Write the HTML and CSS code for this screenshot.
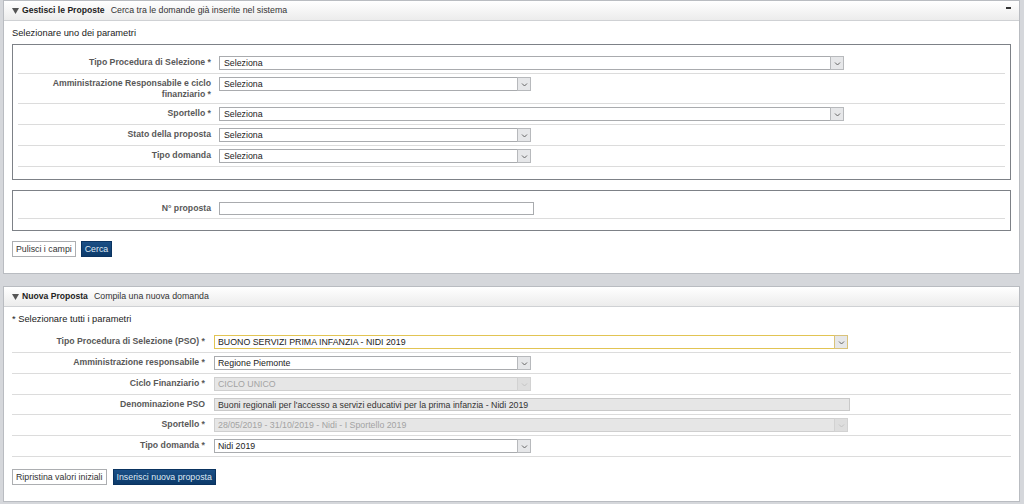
FILE: index.html
```html
<!DOCTYPE html>
<html lang="it">
<head>
<meta charset="utf-8">
<title>Gestisci le Proposte</title>
<link rel="stylesheet" href="styles.css">
</head>
<body>
<div class="page">
  <section class="panel panel-search">
    <header class="panel-head">
      <svg class="tri" width="7" height="6" viewBox="0 0 7 6"><polygon points="0,0 7,0 3.5,6" fill="#555"/></svg>
      <span class="title">Gestisci le Proposte</span>
      <span class="sub">Cerca tra le domande già inserite nel sistema</span>
      <span class="minimize"></span>
    </header>
    <div class="panel-body">
      <p class="hint">Selezionare uno dei parametri</p>
      <div class="box">
        <div class="row">
          <label class="lbl">Tipo Procedura di Selezione *</label>
          <div class="field"><span class="select w-wide">Seleziona<i class="arrow"><svg width="11" height="11" viewBox="0 0 11 11"><polyline points="3,4.5 5.5,7 8,4.5" fill="none" stroke="#666" stroke-width="1"/></svg></i></span></div>
        </div>
        <div class="row">
          <label class="lbl">Amministrazione Responsabile e ciclo finanziario *</label>
          <div class="field"><span class="select w-narrow">Seleziona<i class="arrow"><svg width="11" height="11" viewBox="0 0 11 11"><polyline points="3,4.5 5.5,7 8,4.5" fill="none" stroke="#666" stroke-width="1"/></svg></i></span></div>
        </div>
        <div class="row">
          <label class="lbl">Sportello *</label>
          <div class="field"><span class="select w-wide">Seleziona<i class="arrow"><svg width="11" height="11" viewBox="0 0 11 11"><polyline points="3,4.5 5.5,7 8,4.5" fill="none" stroke="#666" stroke-width="1"/></svg></i></span></div>
        </div>
        <div class="row">
          <label class="lbl">Stato della proposta</label>
          <div class="field"><span class="select w-narrow">Seleziona<i class="arrow"><svg width="11" height="11" viewBox="0 0 11 11"><polyline points="3,4.5 5.5,7 8,4.5" fill="none" stroke="#666" stroke-width="1"/></svg></i></span></div>
        </div>
        <div class="row">
          <label class="lbl">Tipo domanda</label>
          <div class="field"><span class="select w-narrow">Seleziona<i class="arrow"><svg width="11" height="11" viewBox="0 0 11 11"><polyline points="3,4.5 5.5,7 8,4.5" fill="none" stroke="#666" stroke-width="1"/></svg></i></span></div>
        </div>
      </div>
      <div class="box box-num">
        <div class="row">
          <label class="lbl">N° proposta</label>
          <div class="field"><span class="input w-num"></span></div>
        </div>
      </div>
      <div class="actions">
        <button class="btn">Pulisci i campi</button>
        <button class="btn btn-primary">Cerca</button>
      </div>
    </div>
  </section>

  <section class="panel panel-new">
    <header class="panel-head">
      <svg class="tri" width="7" height="6" viewBox="0 0 7 6"><polygon points="0,0 7,0 3.5,6" fill="#555"/></svg>
      <span class="title">Nuova Proposta</span>
      <span class="sub">Compila una nuova domanda</span>
    </header>
    <div class="panel-body">
      <p class="hint hint-new">* Selezionare tutti i parametri</p>
      <div class="rows">
        <div class="row">
          <label class="lbl">Tipo Procedura di Selezione (PSO) *</label>
          <div class="field"><span class="select w-wide2 focused">BUONO SERVIZI PRIMA INFANZIA - NIDI 2019<i class="arrow"><svg width="11" height="11" viewBox="0 0 11 11"><polyline points="3,4.5 5.5,7 8,4.5" fill="none" stroke="#666" stroke-width="1"/></svg></i></span></div>
        </div>
        <div class="row">
          <label class="lbl">Amministrazione responsabile *</label>
          <div class="field"><span class="select w-narrow2">Regione Piemonte<i class="arrow"><svg width="11" height="11" viewBox="0 0 11 11"><polyline points="3,4.5 5.5,7 8,4.5" fill="none" stroke="#666" stroke-width="1"/></svg></i></span></div>
        </div>
        <div class="row">
          <label class="lbl">Ciclo Finanziario *</label>
          <div class="field"><span class="select w-narrow2 disabled">CICLO UNICO<i class="arrow"><svg width="11" height="11" viewBox="0 0 11 11"><polyline points="3,4.5 5.5,7 8,4.5" fill="none" stroke="#c4c4c4" stroke-width="1"/></svg></i></span></div>
        </div>
        <div class="row">
          <label class="lbl">Denominazione PSO</label>
          <div class="field"><span class="input w-den readonly">Buoni regionali per l'accesso a servizi educativi per la prima infanzia - Nidi 2019</span></div>
        </div>
        <div class="row">
          <label class="lbl">Sportello *</label>
          <div class="field"><span class="select w-wide2 disabled">28/05/2019 - 31/10/2019 - Nidi - I Sportello 2019<i class="arrow"><svg width="11" height="11" viewBox="0 0 11 11"><polyline points="3,4.5 5.5,7 8,4.5" fill="none" stroke="#c4c4c4" stroke-width="1"/></svg></i></span></div>
        </div>
        <div class="row">
          <label class="lbl">Tipo domanda *</label>
          <div class="field"><span class="select w-narrow2">Nidi 2019<i class="arrow"><svg width="11" height="11" viewBox="0 0 11 11"><polyline points="3,4.5 5.5,7 8,4.5" fill="none" stroke="#666" stroke-width="1"/></svg></i></span></div>
        </div>
      </div>
      <div class="actions actions-new">
        <button class="btn">Ripristina valori iniziali</button>
        <button class="btn btn-primary">Inserisci nuova proposta</button>
      </div>
    </div>
  </section>
</div>
</body>
</html>
```

FILE: styles.css
```css
* { box-sizing: border-box; }

html, body {
  margin: 0;
  padding: 0;
  background: #d5d7db;
}

body {
  font-family: "Liberation Sans", Arial, sans-serif;
  font-size: 9px;
  line-height: 11px;
  color: #222;
}

.page {
  display: flex;
  flex-direction: column;
  gap: 12px;
  padding: 0 4px 4px 3px;
}

.panel {
  background: #fff;
  border: 1px solid #b9bcc1;
}

.panel-head {
  display: flex;
  align-items: center;
  height: 20px;
  padding: 0 7px 0 8px;
  background: linear-gradient(#ffffff, #ececec);
  border-bottom: 1px solid #cfd1d4;
  color: #222;
  font-size: 8.6px;
}

.tri { margin-right: 3px; flex: none; }

.title {
  font-weight: bold;
  margin-right: 6px;
}

.sub { color: #333; font-size: 8.8px; }

.minimize {
  margin-left: auto;
  margin-right: 1px;
  width: 5px;
  height: 2px;
  background: #333;
  margin-bottom: 6px;
}

.panel-body {
  padding: 7px 8px 16px 8px;
}

.hint {
  margin: 0;
  color: #222;
  font-size: 9.3px;
}

.box {
  margin-top: 5px;
  border: 1px solid #7d8187;
  padding: 8px 5px 12px 5px;
}

.box-num {
  margin-top: 10px;
  padding-bottom: 11px;
}

.row {
  display: grid;
  grid-template-columns: 201px 1fr;
  align-items: start;
  padding: 3px 0;
  border-bottom: 1px solid #dcdcdc;
}

.lbl {
  text-align: right;
  padding-right: 8px;
  font-weight: bold;
  font-size: 8.7px;
  color: #585858;
  line-height: 11px;
  padding-top: 1px;
}

.field { display: flex; }

.select, .input {
  position: relative;
  display: block;
  height: 14px;
  border: 1px solid #a9abae;
  background: #fff;
  padding: 0 16px 0 4px;
  line-height: 12px;
  font-size: 8.8px;
  color: #222;
  white-space: nowrap;
}

.input { padding-right: 3px; height: 13px; }

.arrow {
  position: absolute;
  top: -1px;
  right: -1px;
  width: 14px;
  height: 14px;
  background: #e6e7e9;
  border: 1px solid #b7b9bc;
  display: flex;
  align-items: center;
  justify-content: center;
}

.w-wide { width: 625px; }
.w-narrow { width: 312px; }
.w-num { width: 315px; }

.rows { margin-top: 7px; }

.panel-new .row {
  grid-template-columns: 202px 1fr;
}

.panel-new .lbl { padding-right: 9px; }

.panel-new .select, .panel-new .input { padding-left: 3px; }

.w-wide2 { width: 634px; }
.w-narrow2 { width: 317px; }
.w-den { width: 636px; }

.focused { border-color: #e2c453; }
.focused .arrow { border-color: #d9c27a; }

.disabled {
  background: #e6e6e6;
  color: #a3a3a3;
  border-color: #cfcfcf;
}

.disabled .arrow {
  background: #dedede;
  border-color: #d2d2d2;
}

.readonly {
  background: #e6e6e6;
  border-color: #c9c9c9;
  color: #333;
}

.actions {
  display: flex;
  gap: 5px;
  margin-top: 10px;
}

.actions-new { margin-top: 12px; gap: 6px; }

.btn {
  height: 16px;
  padding: 0 3px;
  border: 1px solid #acaeb1;
  background: #fff;
  font-family: "Liberation Sans", Arial, sans-serif;
  font-size: 8.8px;
  line-height: 14px;
  color: #333;
  border-radius: 0;
}

.btn-primary {
  background: linear-gradient(#1b4f86, #0c3a6a);
  border-color: #0a3360;
  color: #dfe9f5;
}
```
